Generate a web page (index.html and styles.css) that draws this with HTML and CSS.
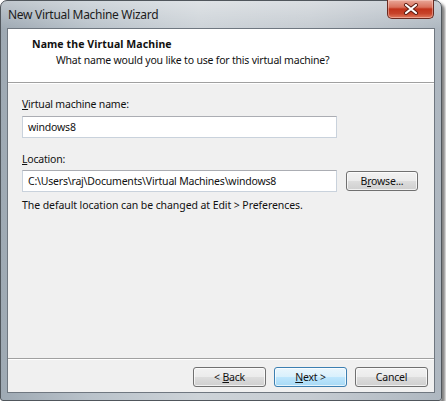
FILE: index.html
```html
<!DOCTYPE html>
<html>
<head>
<meta charset="utf-8">
<link rel="stylesheet" href="styles.css">
</head>
<body>
<div class="window">
  <div class="titlebar">
    <span class="title">New Virtual Machine Wizard</span>
    <div class="close">
      <svg width="16" height="12" viewBox="0 0 16 12">
        <path d="M3 2 L13 10 M13 2 L3 10" stroke="#5a1a10" stroke-width="4" stroke-linecap="round"/>
        <path d="M3 2 L13 10 M13 2 L3 10" stroke="#ffffff" stroke-width="2.2" stroke-linecap="round"/>
      </svg>
    </div>
  </div>
  <div class="client">
    <div class="header">
      <div class="h-title">Name the Virtual Machine</div>
      <div class="h-sub">What name would you like to use for this virtual machine?</div>
    </div>
    <div class="body">
      <div class="lbl"><u>V</u>irtual machine name:</div>
      <div class="input">windows8</div>
      <div class="lbl loc"><u>L</u>ocation:</div>
      <div class="row">
        <div class="input">C:\Users\raj\Documents\Virtual Machines\windows8</div>
        <div class="btn browse">B<u>r</u>owse...</div>
      </div>
      <div class="note">The default location can be changed at Edit &gt; Preferences.</div>
    </div>
    <div class="footer">
      <div class="btn">&lt; <u>B</u>ack</div>
      <div class="btn default"><u>N</u>ext &gt;</div>
      <div class="btn">Cancel</div>
    </div>
  </div>
</div>
</body>
</html>
```
FILE: styles.css
```css
html, body {
  margin: 0;
  padding: 0;
  background: #ffffff;
}
body {
  font-family: "Noto Sans", "Open Sans", sans-serif;
  font-size: 10.5px;
  letter-spacing: -0.2px;
  color: #111111;
}
.window {
  box-sizing: border-box;
  width: 442px;
  height: 401px;
  border: 1px solid #50565c;
  border-radius: 7px 7px 3px 3px;
  background:
    linear-gradient(to bottom, rgba(255,255,255,0.35), rgba(255,255,255,0) 28px),
    linear-gradient(to right, #9ea9b3 0%, #b9c2ca 20%, #cdd3d8 45%, #c6ccd2 70%, #aeb7c0 100%);
  box-shadow: 3px 3px 3px rgba(0,0,0,0.5);
  display: flex;
  flex-direction: column;
  padding: 0 6px 7px 6px;
}
.titlebar {
  height: 27px;
  display: flex;
  justify-content: space-between;
  align-items: flex-start;
  margin-right: -6px;
}
.title {
  font-size: 12px;
  letter-spacing: -0.3px;
  color: #1c1c1c;
  padding-left: 1px;
  line-height: 30px;
  margin-top: -1px;
}
.close {
  box-sizing: border-box;
  width: 47px;
  height: 19px;
  margin-top: -1px;
  margin-right: 7px;
  border: 1px solid #6a2a20;
  border-top: none;
  border-radius: 0 0 5px 5px;
  background: linear-gradient(to bottom, #e9a899 0%, #d9715c 40%, #c1331b 50%, #c7432a 75%, #e07a5e 100%);
  box-shadow: inset 0 0 0 1px rgba(255,220,210,0.45);
  display: flex;
  align-items: center;
  justify-content: center;
}
.client {
  flex: 1;
  border: 1px solid #6f7780;
  background: #f0f0f0;
  display: flex;
  flex-direction: column;
}
.header {
  height: 53px;
  background: #ffffff;
  border-bottom: 1px solid #a0a0a0;
  box-shadow: 0 1px 0 #ffffff;
  box-sizing: content-box;
  padding-left: 24px;
}
.h-title {
  font-weight: bold;
  letter-spacing: 0.1px;
  margin-top: 7px;
  line-height: 16px;
}
.h-sub {
  padding-left: 24px;
  line-height: 16px;
}
.body {
  flex: 1;
  padding: 13px 14px 0 14px;
}
.lbl {
  line-height: 16px;
}
.lbl.loc {
  margin-top: 13px;
}
.input {
  box-sizing: border-box;
  width: 315px;
  height: 22px;
  margin-top: 4px;
  border: 1px solid #c9d2dc;
  border-top-color: #abadb3;
  background: #ffffff;
  padding-left: 5px;
  line-height: 20px;
}
.row {
  display: flex;
  align-items: center;
  gap: 9px;
  margin-top: 3px;
}
.row .input {
  margin-top: 0;
}
.note {
  margin-top: 5px;
  line-height: 16px;
  letter-spacing: -0.08px;
}
.btn {
  box-sizing: border-box;
  width: 73px;
  height: 20px;
  border: 1px solid #707070;
  border-radius: 3px;
  background: linear-gradient(to bottom, #f2f2f2 0%, #ebebeb 50%, #dddddd 51%, #cfcfcf 100%);
  box-shadow: inset 0 0 0 1px rgba(255,255,255,0.7);
  text-align: center;
  line-height: 18px;
}
.browse {
  width: 72px;
}
.btn.default {
  border-color: #3c7fb1;
  background: linear-gradient(to bottom, #eaf6fd 0%, #d9f0fc 50%, #bee6fd 51%, #a7d9f5 100%);
}
.footer {
  border-top: 1px solid #a0a0a0;
  box-shadow: inset 0 1px 0 #ffffff;
  display: flex;
  justify-content: flex-end;
  gap: 8px;
  padding: 8px 6px 5px 0;
}
u {
  text-decoration: underline;
  text-underline-offset: 1px;
}
```
